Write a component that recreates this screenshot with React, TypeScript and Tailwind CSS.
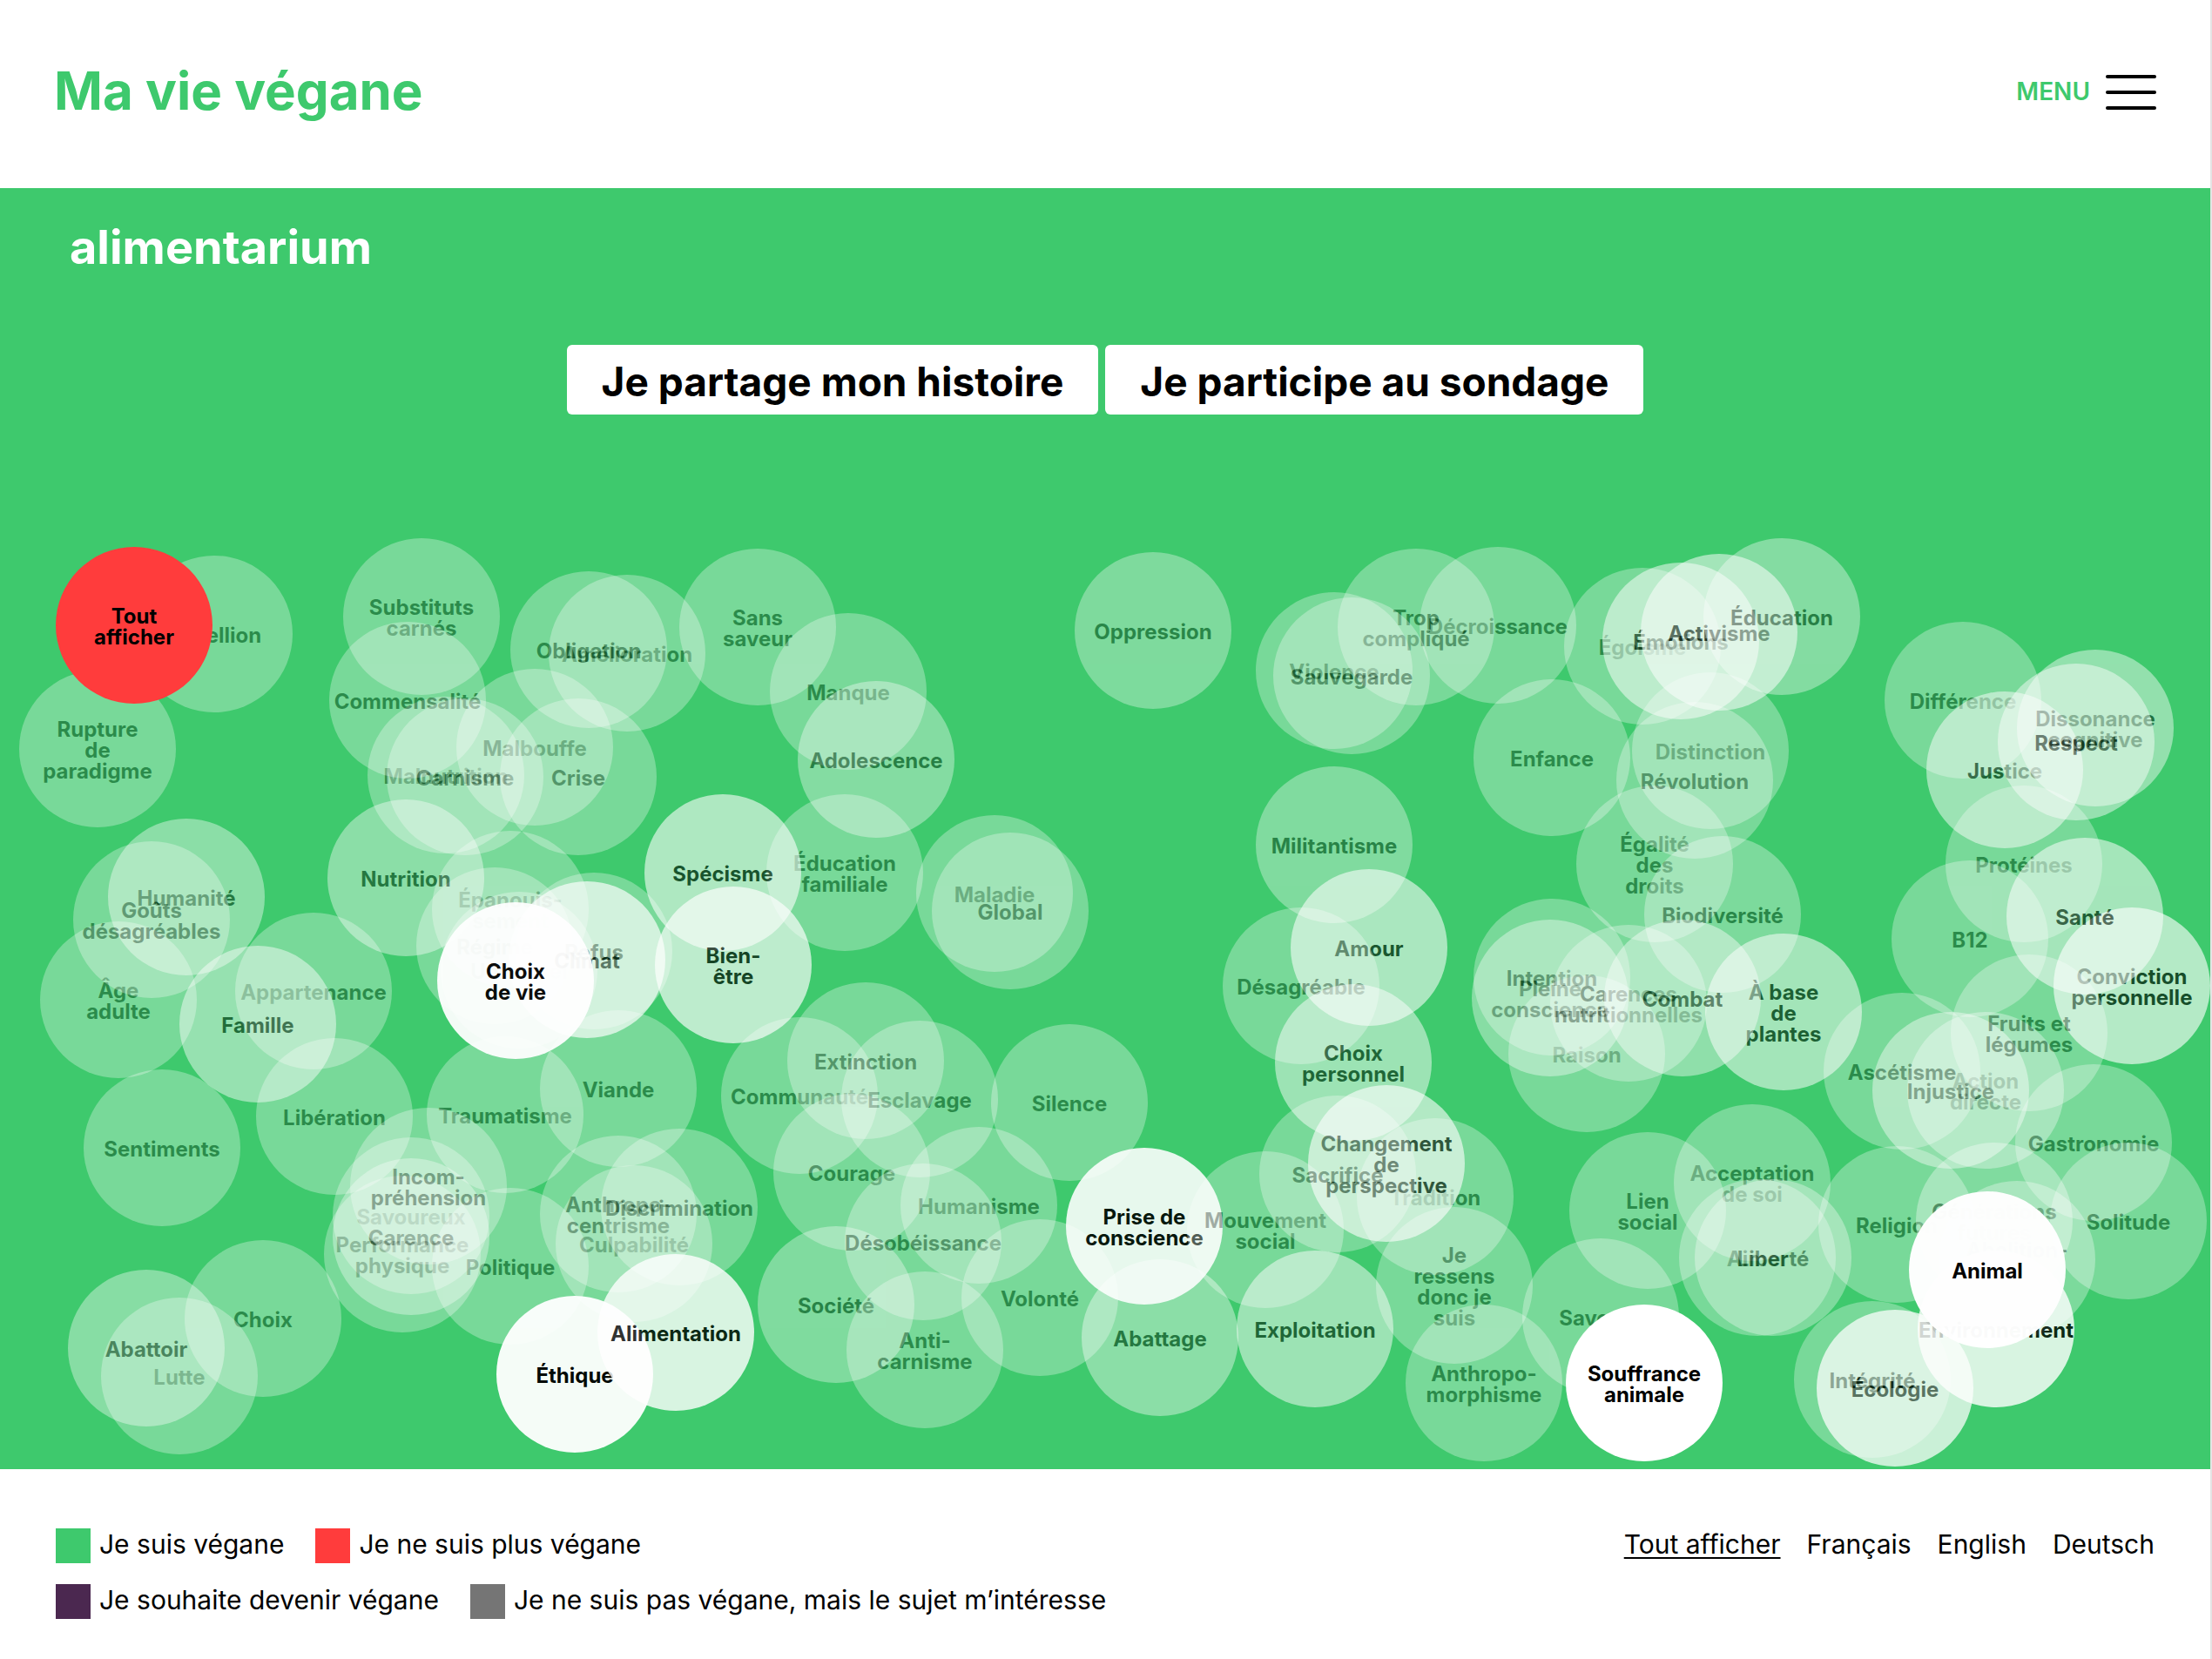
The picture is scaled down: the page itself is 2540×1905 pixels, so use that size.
type Topic = {
  label: string;
  x: number;
  y: number;
  weight: number;
};

// Width the x positions below were measured on, they are turned into percentages.
const MAP_WIDTH = 2538;

// Later topics are painted over earlier ones.
const topics: Topic[] = [
  { label: "Rébellion", x: 156, y: 22, weight: 0.3 },
  { label: "Rupture\nde\nparadigme", x: 22, y: 154, weight: 0.3 },
  { label: "Substituts\ncarnés", x: 394, y: 2, weight: 0.3 },
  { label: "Malnutrition", x: 422, y: 184, weight: 0.3 },
  { label: "Malbouffe", x: 524, y: 152, weight: 0.3 },
  { label: "Commensalité", x: 378, y: 98, weight: 0.3 },
  { label: "Carnisme", x: 444, y: 186, weight: 0.3 },
  { label: "Amélioration", x: 630, y: 44, weight: 0.3 },
  { label: "Obligation", x: 586, y: 40, weight: 0.3 },
  { label: "Crise", x: 574, y: 186, weight: 0.3 },
  { label: "Sans\nsaveur", x: 780, y: 14, weight: 0.3 },
  { label: "Manque", x: 884, y: 88, weight: 0.3 },
  { label: "Éducation\nfamiliale", x: 880, y: 296, weight: 0.3 },
  { label: "Adolescence", x: 916, y: 166, weight: 0.36 },
  { label: "Maladie", x: 1052, y: 320, weight: 0.3 },
  { label: "Global", x: 1070, y: 340, weight: 0.3 },
  { label: "Oppression", x: 1234, y: 18, weight: 0.33 },
  { label: "Humanité", x: 124, y: 324, weight: 0.4 },
  { label: "Âge\nadulte", x: 46, y: 442, weight: 0.3 },
  { label: "Goûts\ndésagréables", x: 84, y: 350, weight: 0.3 },
  { label: "Appartenance", x: 270, y: 432, weight: 0.3 },
  { label: "Famille", x: 206, y: 470, weight: 0.46 },
  { label: "Épanouis-\nsement", x: 496, y: 338, weight: 0.3 },
  { label: "Universel", x: 506, y: 408, weight: 0.3 },
  { label: "Régime", x: 478, y: 380, weight: 0.3 },
  { label: "Nutrition", x: 376, y: 302, weight: 0.4 },
  { label: "Climat", x: 584, y: 396, weight: 0.67 },
  { label: "Refus", x: 592, y: 386, weight: 0.3 },
  { label: "Traumatisme", x: 490, y: 574, weight: 0.3 },
  { label: "Viande", x: 620, y: 544, weight: 0.3 },
  { label: "Choix\nde vie", x: 502, y: 420, weight: 0.94 },
  { label: "Spécisme", x: 740, y: 296, weight: 0.58 },
  { label: "Bien-\nêtre", x: 752, y: 402, weight: 0.66 },
  { label: "Sentiments", x: 96, y: 612, weight: 0.3 },
  { label: "Libération", x: 294, y: 576, weight: 0.3 },
  { label: "Savoureux", x: 382, y: 690, weight: 0.3 },
  { label: "Performance\nphysique", x: 372, y: 734, weight: 0.3 },
  { label: "Politique", x: 496, y: 748, weight: 0.3 },
  { label: "Carence", x: 382, y: 714, weight: 0.34 },
  { label: "Incom-\npréhension", x: 402, y: 656, weight: 0.3 },
  { label: "Culpabilité", x: 638, y: 722, weight: 0.3 },
  { label: "Anthropo-\ncentrisme", x: 620, y: 688, weight: 0.3 },
  { label: "Discrimination", x: 690, y: 680, weight: 0.3 },
  { label: "Choix", x: 212, y: 808, weight: 0.3 },
  { label: "Lutte", x: 116, y: 874, weight: 0.3 },
  { label: "Abattoir", x: 78, y: 842, weight: 0.38 },
  { label: "Éthique", x: 570, y: 872, weight: 0.95 },
  { label: "Alimentation", x: 686, y: 824, weight: 0.8 },
  { label: "Communauté", x: 828, y: 552, weight: 0.3 },
  { label: "Courage", x: 888, y: 640, weight: 0.3 },
  { label: "Esclavage", x: 966, y: 556, weight: 0.3 },
  { label: "Extinction", x: 904, y: 512, weight: 0.3 },
  { label: "Silence", x: 1138, y: 560, weight: 0.3 },
  { label: "Humanisme", x: 1034, y: 678, weight: 0.3 },
  { label: "Société", x: 870, y: 792, weight: 0.34 },
  { label: "Désobéissance", x: 970, y: 720, weight: 0.3 },
  { label: "Volonté", x: 1104, y: 784, weight: 0.3 },
  { label: "Anti-\ncarnisme", x: 972, y: 844, weight: 0.3 },
  { label: "Prise de\nconscience", x: 1224, y: 702, weight: 0.88 },
  { label: "Abattage", x: 1242, y: 830, weight: 0.4 },
  { label: "Mouvement\nsocial", x: 1363, y: 706, weight: 0.3 },
  { label: "Exploitation", x: 1420, y: 820, weight: 0.49 },
  { label: "Violence", x: 1442, y: 64, weight: 0.3 },
  { label: "Décroissance", x: 1630, y: 12, weight: 0.3 },
  { label: "Trop\ncompliqué", x: 1536, y: 14, weight: 0.3 },
  { label: "Sauvegarde", x: 1462, y: 70, weight: 0.3 },
  { label: "Militantisme", x: 1442, y: 264, weight: 0.34 },
  { label: "Amour", x: 1482, y: 382, weight: 0.56 },
  { label: "Désagréable", x: 1404, y: 426, weight: 0.3 },
  { label: "Choix\npersonnel", x: 1464, y: 514, weight: 0.49 },
  { label: "Tradition", x: 1558, y: 668, weight: 0.3 },
  { label: "Changement\nde\nperspective", x: 1502, y: 630, weight: 0.6 },
  { label: "Sacrifice", x: 1446, y: 642, weight: 0.3 },
  { label: "Je\nressens\ndonc je\nsuis", x: 1580, y: 770, weight: 0.3 },
  { label: "Anthropo-\nmorphisme", x: 1614, y: 882, weight: 0.3 },
  { label: "Saveurs", x: 1748, y: 806, weight: 0.3 },
  { label: "Enfance", x: 1692, y: 164, weight: 0.3 },
  { label: "Égoïsme", x: 1796, y: 36, weight: 0.3 },
  { label: "Émotions", x: 1840, y: 30, weight: 0.5 },
  { label: "Activisme", x: 1884, y: 20, weight: 0.52 },
  { label: "Éducation", x: 1956, y: 2, weight: 0.36 },
  { label: "Distinction", x: 1874, y: 156, weight: 0.3 },
  { label: "Égalité\ndes\ndroits", x: 1810, y: 286, weight: 0.3 },
  { label: "Révolution", x: 1856, y: 190, weight: 0.3 },
  { label: "Biodiversité", x: 1888, y: 344, weight: 0.32 },
  { label: "Raison", x: 1732, y: 504, weight: 0.3 },
  { label: "Pleine\nconscience", x: 1690, y: 440, weight: 0.38 },
  { label: "Intention", x: 1692, y: 416, weight: 0.3 },
  { label: "Carences\nnutritionnelles", x: 1780, y: 446, weight: 0.3 },
  { label: "À base\nde\nplantes", x: 1958, y: 456, weight: 0.52 },
  { label: "Combat", x: 1842, y: 440, weight: 0.42 },
  { label: "Acceptation\nde soi", x: 1922, y: 652, weight: 0.3 },
  { label: "Lien\nsocial", x: 1802, y: 684, weight: 0.3 },
  { label: "Aimer", x: 1928, y: 738, weight: 0.3 },
  { label: "Liberté", x: 1946, y: 738, weight: 0.33 },
  { label: "Souffrance\nanimale", x: 1798, y: 882, weight: 1 },
  { label: "Différence", x: 2164, y: 98, weight: 0.3 },
  { label: "Justice", x: 2212, y: 178, weight: 0.49 },
  { label: "Dissonance\ncognitive", x: 2316, y: 130, weight: 0.44 },
  { label: "Respect", x: 2294, y: 146, weight: 0.46 },
  { label: "Protéines", x: 2234, y: 286, weight: 0.3 },
  { label: "B12", x: 2172, y: 372, weight: 0.3 },
  { label: "Conviction\npersonnelle", x: 2358, y: 426, weight: 0.61 },
  { label: "Santé", x: 2304, y: 346, weight: 0.53 },
  { label: "Action\ndirecte", x: 2190, y: 546, weight: 0.34 },
  { label: "Injustice", x: 2150, y: 546, weight: 0.42 },
  { label: "Ascétisme", x: 2094, y: 524, weight: 0.3 },
  { label: "Fruits et\nlégumes", x: 2240, y: 480, weight: 0.3 },
  { label: "Gastronomie", x: 2314, y: 606, weight: 0.3 },
  { label: "Solitude", x: 2354, y: 696, weight: 0.3 },
  { label: "Religion", x: 2088, y: 700, weight: 0.3 },
  { label: "Générations\nfutures", x: 2200, y: 696, weight: 0.34 },
  { label: "Abolition-\nnisme", x: 2226, y: 740, weight: 0.32 },
  { label: "Environnement", x: 2202, y: 820, weight: 0.8 },
  { label: "Écologie", x: 2086, y: 888, weight: 0.73 },
  { label: "Intégrité", x: 2060, y: 878, weight: 0.3 },
  { label: "Animal", x: 2192, y: 752, weight: 0.98 },
];

const legend = [
  [
    { label: "Je suis végane", swatch: "bg-[#3ec96d]" },
    { label: "Je ne suis plus végane", swatch: "bg-[#ff3c3c]" },
  ],
  [
    { label: "Je souhaite devenir végane", swatch: "bg-[#4b2850]" },
    { label: "Je ne suis pas végane, mais le sujet m’intéresse", swatch: "bg-[#757575]" },
  ],
];

const bubbleClass =
  "absolute flex size-[180px] cursor-pointer items-center justify-center rounded-full pt-1 text-center text-2xl/6 font-bold whitespace-pre text-black";

function Header() {
  return (
    <header className="flex h-[216px] items-center justify-between px-[62px] pb-1">
      <h1 className="pb-1 text-[60px]/[72px] font-bold text-[#3ec96d]">
        <a href="#">Ma vie végane</a>
      </h1>
      <button type="button" className="flex items-center gap-[18px]">
        <span className="pb-0.5 text-[28px]/8 font-semibold text-[#3ec96d]">MENU</span>
        <span className="flex w-[58px] flex-col gap-[14px]">
          <span className="h-1 rounded-xs bg-black" />
          <span className="h-1 rounded-xs bg-black" />
          <span className="h-1 rounded-xs bg-black" />
        </span>
      </button>
    </header>
  );
}

function TopicMap() {
  return (
    <div className="relative mt-[140px] h-[1071px]">
      {topics.map((topic) => (
        <button
          key={topic.label}
          type="button"
          className={`${bubbleClass} bg-white`}
          style={{
            left: `${(topic.x / MAP_WIDTH) * 100}%`,
            top: topic.y,
            opacity: topic.weight,
          }}
        >
          {topic.label}
        </button>
      ))}
      <button type="button" className={`${bubbleClass} top-3 left-16 bg-[#ff3c3c]`}>
        {"Tout\nafficher"}
      </button>
    </div>
  );
}

function Footer() {
  return (
    <footer className="flex items-start justify-between px-16 pt-[68px] pb-[46px] text-[30px]/10 text-black">
      <div className="flex flex-col gap-6">
        {legend.map((row, i) => (
          <ul key={i} className="flex gap-9">
            {row.map((item) => (
              <li key={item.label} className="flex gap-2.5">
                <span className={`size-10 ${item.swatch}`} />
                <span className="-mt-0.5">{item.label}</span>
              </li>
            ))}
          </ul>
        ))}
      </div>
      <nav className="-mt-0.5 flex gap-[30px]">
        <a href="#" className="underline decoration-2 underline-offset-4">
          Tout afficher
        </a>
        <a href="#fr">Français</a>
        <a href="#en">English</a>
        <a href="#de">Deutsch</a>
      </nav>
    </footer>
  );
}

export default function App() {
  return (
    <div className="border-r-2 border-[#e4e4e4] bg-white font-['Inter','Liberation_Sans',sans-serif]">
      <Header />
      <main className="bg-[#3ec96d] pt-9">
        <a href="#" className="ml-20 block w-fit text-[54px]/[64px] font-bold text-white">
          alimentarium
        </a>
        <div className="mt-20 flex justify-center gap-2">
          <button
            type="button"
            className="h-20 rounded-md bg-white px-10 pt-1 text-[46px] font-bold text-black"
          >
            Je partage mon histoire
          </button>
          <button
            type="button"
            className="h-20 rounded-md bg-white px-10 pt-1 text-[46px] font-bold text-black"
          >
            Je participe au sondage
          </button>
        </div>
        <TopicMap />
      </main>
      <Footer />
    </div>
  );
}
